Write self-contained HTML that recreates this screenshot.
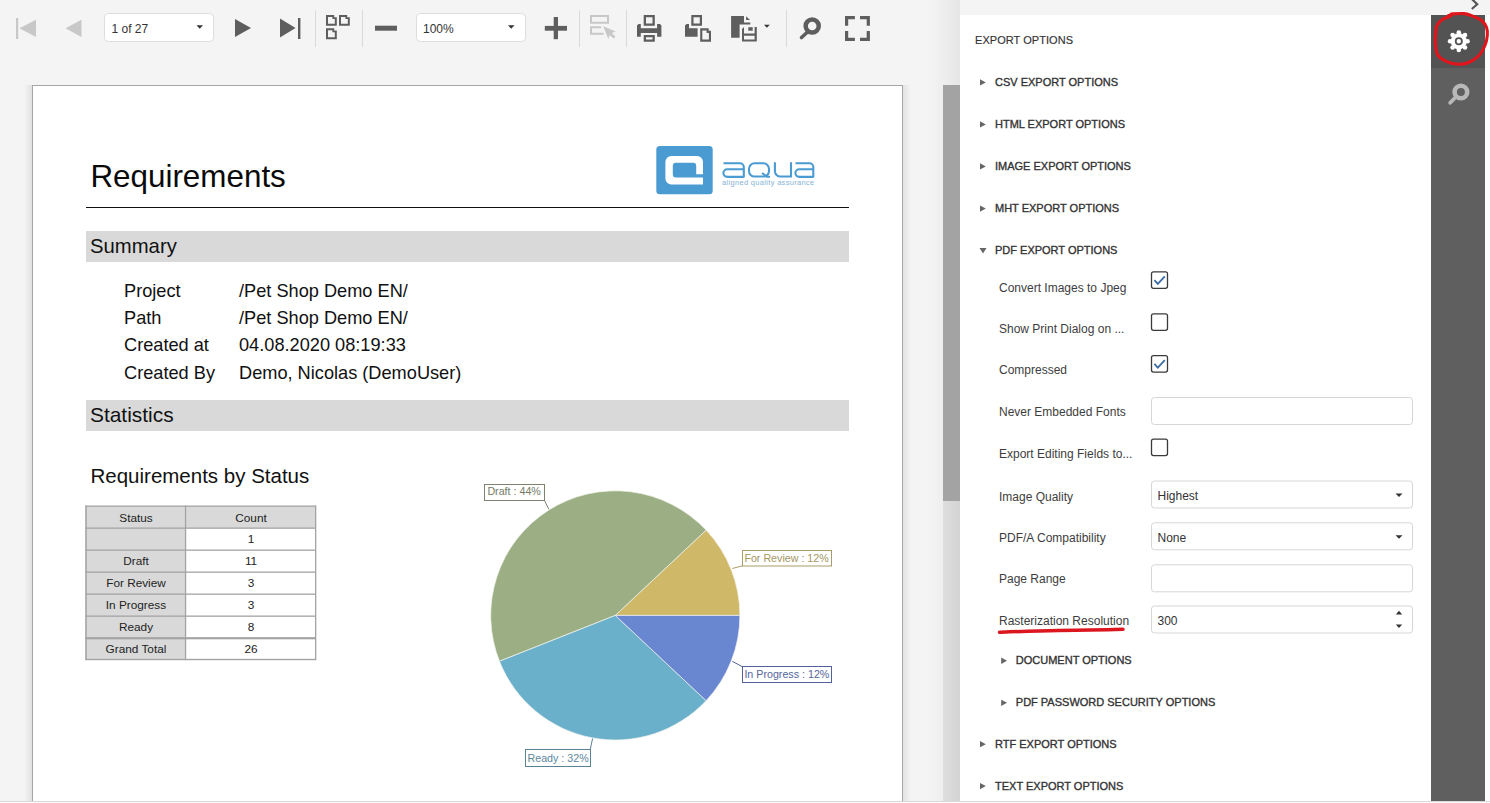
<!DOCTYPE html>
<html><head><meta charset="utf-8">
<style>
*{box-sizing:border-box}
html,body{margin:0;padding:0;width:1490px;height:803px;overflow:hidden;background:#f4f4f4;font-family:"Liberation Sans",sans-serif}
.a{position:absolute}
.t{position:absolute;white-space:nowrap;line-height:1}
svg{position:absolute;overflow:visible}
</style></head><body>
<!-- ============ VIEWER AREA ============ -->
<div class="a" id="viewer" style="left:0;top:0;width:960px;height:801px;background:#f4f4f4">
  <!-- page shadow -->
  <div class="a" style="left:24px;top:85px;width:8px;height:716px;background:linear-gradient(to right,rgba(0,0,0,0),rgba(0,0,0,0.08))"></div>
  <div class="a" style="left:903px;top:85px;width:8px;height:716px;background:linear-gradient(to left,rgba(0,0,0,0),rgba(0,0,0,0.07))"></div>
  <div class="a" style="left:32px;top:85px;width:871px;height:760px;background:#fff;border:1px solid #a6a6a6"></div>
  <!-- scrollbar shadow -->
  <div class="a" style="left:930px;top:0;width:30px;height:801px;background:linear-gradient(to right,rgba(0,0,0,0),rgba(0,0,0,0.06))"></div>
  <!-- scrollbar track & thumb -->
  <div class="a" style="left:943px;top:500px;width:17px;height:301px;background:linear-gradient(to right,#dedede,#d3d3d3)"></div>
  <div class="a" style="left:943px;top:85px;width:17px;height:416px;background:#a3a3a3"></div>
</div>
<div class="a" style="left:0;top:801px;width:1490px;height:1px;background:#dadada"></div><div class="a" style="left:0;top:802px;width:1490px;height:1px;background:#fbfbfb"></div>

<!-- ============ TOOLBAR ============ -->
<div id="toolbar"><svg style="left:0;top:0" width="960" height="60" viewBox="0 0 960 60">
<g fill="#c8c8c8">
<rect x="16" y="18" width="2.2" height="21"/>
<polygon points="19.5,28.3 36,19.7 36,37"/>
<polygon points="65.5,28.3 81.5,19.7 81.5,37"/>
</g>
<rect x="104.5" y="13.5" width="109" height="28" rx="4" fill="#fff" stroke="#dddddd"/>
<rect x="416.5" y="13.5" width="109" height="28" rx="4" fill="#fff" stroke="#dddddd"/>
<g fill="#333"><polygon points="196.5,25.3 203,25.3 199.75,28.8"/><polygon points="508,25.3 514.5,25.3 511.25,28.8"/>
<polygon points="764,24.8 769.8,24.8 766.9,27.8"/></g>
<g fill="#5e5e5e">
<polygon points="235,19 235,37 251,28"/>
<polygon points="280,18.5 280,37.5 295.5,28"/>
<rect x="298" y="18" width="2.4" height="21"/>
<path fill-rule="evenodd" d="M326,15H334.2V17.2H336.8V25.7H326Z M328,17H332.4V19H334.8V23.7H328Z"/>
<path fill-rule="evenodd" d="M339,15H347.2V17.2H349.8V25.7H339Z M341,17H345.4V19H347.8V23.7H341Z"/>
<path fill-rule="evenodd" d="M326,28.3H334.2V30.5H336.8V39.2H326Z M328,30.3H332.4V32.3H334.8V37.2H328Z"/>
<rect x="375" y="25.7" width="22" height="5"/>
<rect x="544.8" y="25.9" width="22.2" height="4.8"/>
<rect x="553.7" y="17" width="4.3" height="22.2"/>
<!-- printer -->
<path fill-rule="evenodd" d="M643.7,15H654.8V25.7H643.7Z M646,17.3H652.5V23.5H646Z"/>
<path d="M637,25.5L638.5,24H640.8V28.3H657.1V24H660L661.4,25.5V36.8H657.1V33.1H640.8V36.8H637Z"/>
<path fill-rule="evenodd" d="M643.7,35.1H654.8V41.7H643.7Z M646,37.3H652.5V39.4H646Z"/>
<!-- print page -->
<path fill-rule="evenodd" d="M691.3,15H702V25.7H691.3Z M693.5,17.3H699.8V23.5H693.5Z"/>
<path d="M685,25.5L686.5,24H689V28.3H697.6V36.8H685Z"/>
<path fill-rule="evenodd" d="M700.2,28.3H708.7V30.8H711V41.7H700.2Z M702.3,30.4H706.6V32.9H708.9V39.6H702.3Z"/>
<!-- export -->
<path d="M731.1,16.1H744V22.6H750.3V24.4H739.6V37.7H731.1Z"/>
<polygon points="746.1,16.3 750,20 746.1,20"/>
<path fill-rule="evenodd" d="M742,29L744,27V33.5H754.6V27H756.8V41.6H742Z M744,35.7H754.6V39.5H744Z"/>
<rect x="748.3" y="27.2" width="4.4" height="3.5"/>
<!-- search -->
<circle cx="812.2" cy="26" r="6.55" fill="none" stroke="#5e5e5e" stroke-width="4.5"/>
<line x1="807" y1="32.5" x2="801.5" y2="37.5" stroke="#5e5e5e" stroke-width="3.6" stroke-linecap="round"/>
<!-- fullscreen -->
<path d="M845,16H854.9V19.2H848.2V25.8H845Z"/>
<path d="M869.9,16H860V19.2H866.7V25.8H869.9Z"/>
<path d="M845,40.9H854.9V37.7H848.2V31.1H845Z"/>
<path d="M869.9,40.9H860V37.7H866.7V31.1H869.9Z"/>
</g>
<g fill="#c8c8c8">
<path fill-rule="evenodd" d="M590,15H609V23.7H590Z M592,17H607V21.7H592Z"/>
<path d="M590,26.3H601V28.3H592V32.8H603.7V34.8H590Z"/>
<polygon points="603.3,26.3 615.7,31.4 611.8,33 615.5,36.8 613.5,38.6 609.8,34.9 608.3,39"/>
</g>
<g fill="#dadada">
<rect x="315" y="10" width="1" height="37"/>
<rect x="362" y="10" width="1" height="37"/>
<rect x="579" y="10" width="1" height="37"/>
<rect x="626" y="10" width="1" height="37"/>
<rect x="786" y="10" width="1" height="37"/>
</g>
</svg>
<div class="t" style="left:111.5px;top:22.8px;font-size:12px;color:#333">1 of 27</div>
<div class="t" style="left:423px;top:22.8px;font-size:12px;color:#333">100%</div>
</div>

<!-- ============ DOCUMENT ============ -->
<div id="doc">
<div class="t" style="left:90.4px;top:161px;font-size:31.4px;color:#0a0a0a">Requirements</div>
<div class="a" style="left:86px;top:206.5px;width:763px;height:1.6px;background:#111"></div>
<!-- logo -->
<svg style="left:0;top:0" width="960" height="803">
<rect x="656.3" y="145.9" width="56.4" height="48.3" rx="3.5" fill="#4b9bd3"/>
<path d="M671.4,156H697A6,6 0 0 1 703,162V174.2H696.2V165.8A3,3 0 0 0 693.2,162.8H675.8A3,3 0 0 0 672.8,165.8V174.6A3,3 0 0 0 675.8,177.6H703V184.5H671.4A6,6 0 0 1 665.4,178.5V162A6,6 0 0 1 671.4,156Z" fill="#fff"/>
<g fill="none" stroke="#4b9bd3" stroke-width="2.1" transform="translate(0,0.5)">
<!-- a -->
<path d="M723.5,162.8H740A3.8,3.8 0 0 1 743.8,166.6V177.1"/>
<path d="M743.8,168.8H727.2A3.8,3.8 0 0 0 727.2,176.4H743.8"/>
<!-- q -->
<path d="M754.5,162.8H763.5A5.5,5.5 0 0 1 769,168.3V170.5A5.5,5.5 0 0 1 763.5,176H754.5A5.5,5.5 0 0 1 749,170.5V168.3A5.5,5.5 0 0 1 754.5,162.8Z"/>
<path d="M762,172.5L767,176.2H770"/>
<!-- u -->
<path d="M774.9,161.7V170.5A5.5,5.5 0 0 0 780.4,176H791V161.7"/>
<!-- a -->
<path d="M795.5,162.8H809.5A3.8,3.8 0 0 1 813.3,166.6V177.1"/>
<path d="M813.3,168.8H799.2A3.8,3.8 0 0 0 799.2,176.4H813.3"/>
</g>
<path d="M615.3,615.4 L739.90,615.40 A124.6,124.6 0 0 0 706.13,530.11 Z" fill="#cfb867" stroke="#f4f4ee" stroke-width="0.7"/><path d="M615.3,615.4 L706.13,530.11 A124.6,124.6 0 0 0 499.45,661.27 Z" fill="#9caf84" stroke="#f4f4ee" stroke-width="0.7"/><path d="M615.3,615.4 L499.45,661.27 A124.6,124.6 0 0 0 706.13,700.69 Z" fill="#6bb0cb" stroke="#f4f4ee" stroke-width="0.7"/><path d="M615.3,615.4 L706.13,700.69 A124.6,124.6 0 0 0 739.90,615.40 Z" fill="#6986d1" stroke="#f4f4ee" stroke-width="0.7"/>
<g fill="none" stroke-width="1">
<rect x="484.5" y="484.5" width="60" height="16" stroke="#7c8470"/>
<polyline points="544.5,500.5 548.8,509.3" stroke="#7c8470"/>
<rect x="742.5" y="550.5" width="89" height="15.5" stroke="#a89c6a"/>
<polyline points="742.5,565.8 732.3,568.5" stroke="#a89c6a"/>
<rect x="742.5" y="666.5" width="89" height="16" stroke="#53629a"/>
<polyline points="742.5,666.8 732.3,661.3" stroke="#53629a"/>
<rect x="525.5" y="749.5" width="65" height="17" stroke="#5b8194"/>
<polyline points="590.2,749.5 592.6,738.5" stroke="#5b8194"/>
</g>
</svg>
<div class="t" style="left:722px;top:179.6px;font-size:6.6px;color:#86b2d4;letter-spacing:0.3px;transform:scaleX(1.13);transform-origin:left">aligned quality assurance</div>

<div class="a" style="left:86px;top:231px;width:763px;height:30.5px;background:#d9d9d9"></div>
<div class="t" style="left:90px;top:235.8px;font-size:20.3px;color:#111">Summary</div>

<div class="t" style="left:124px;top:282.1px;font-size:18.2px;color:#111">Project</div>
<div class="t" style="left:239px;top:282.1px;font-size:18.2px;color:#111">/Pet Shop Demo EN/</div>
<div class="t" style="left:124px;top:309px;font-size:18.2px;color:#111">Path</div>
<div class="t" style="left:239px;top:309px;font-size:18.2px;color:#111">/Pet Shop Demo EN/</div>
<div class="t" style="left:124px;top:335.8px;font-size:18.2px;color:#111">Created at</div>
<div class="t" style="left:239px;top:335.8px;font-size:18.2px;color:#111">04.08.2020 08:19:33</div>
<div class="t" style="left:124px;top:364px;font-size:18.2px;color:#111">Created By</div>
<div class="t" style="left:239px;top:364px;font-size:18.2px;color:#111">Demo, Nicolas (DemoUser)</div>

<div class="a" style="left:86px;top:400px;width:763px;height:30.5px;background:#d9d9d9"></div>
<div class="t" style="left:90px;top:404.5px;font-size:20.9px;color:#111">Statistics</div>

<div class="t" style="left:90.5px;top:465.5px;font-size:20.5px;color:#111">Requirements by Status</div>
<svg style="left:0;top:0" width="960" height="803"><rect x="86" y="506" width="100" height="22" fill="#d9d9d9"/><rect x="186" y="506" width="130" height="22" fill="#d9d9d9"/><rect x="86" y="528" width="100" height="22" fill="#d9d9d9"/><rect x="186" y="528" width="130" height="22" fill="#fff"/><rect x="86" y="550" width="100" height="22" fill="#d9d9d9"/><rect x="186" y="550" width="130" height="22" fill="#fff"/><rect x="86" y="572" width="100" height="22" fill="#d9d9d9"/><rect x="186" y="572" width="130" height="22" fill="#fff"/><rect x="86" y="594" width="100" height="22" fill="#d9d9d9"/><rect x="186" y="594" width="130" height="22" fill="#fff"/><rect x="86" y="616" width="100" height="22" fill="#d9d9d9"/><rect x="186" y="616" width="130" height="22" fill="#fff"/><rect x="86" y="638" width="100" height="22" fill="#d9d9d9"/><rect x="186" y="638" width="130" height="22" fill="#fff"/><g fill="#a3a3a3"><rect x="85.5" y="505.5" width="230.5" height="1.3"/><rect x="85.5" y="527.5" width="230.5" height="1.3"/><rect x="85.5" y="549.5" width="230.5" height="1.3"/><rect x="85.5" y="571.5" width="230.5" height="1.3"/><rect x="85.5" y="593.5" width="230.5" height="1.3"/><rect x="85.5" y="615.5" width="230.5" height="1.3"/><rect x="85.5" y="637.5" width="230.5" height="1.3"/><rect x="85.5" y="658.8" width="230.5" height="1.4"/><rect x="85.5" y="637.3" width="230.5" height="2"/><rect x="85.2" y="505.5" width="1.6" height="154.7"/><rect x="184.9" y="505.5" width="1.3" height="154.7"/><rect x="315" y="505.5" width="1.3" height="154.7"/></g></svg><div class="t" style="left:86px;width:100px;text-align:center;top:512.5px;font-size:11.8px;color:#222">Status</div><div class="t" style="left:186px;width:130px;text-align:center;top:512.5px;font-size:11.8px;color:#222">Count</div><div class="t" style="left:186px;width:130px;text-align:center;top:534.4px;font-size:11.8px;color:#222">1</div><div class="t" style="left:86px;width:100px;text-align:center;top:556.3px;font-size:11.8px;color:#222">Draft</div><div class="t" style="left:186px;width:130px;text-align:center;top:556.3px;font-size:11.8px;color:#222">11</div><div class="t" style="left:86px;width:100px;text-align:center;top:578.2px;font-size:11.8px;color:#222">For Review</div><div class="t" style="left:186px;width:130px;text-align:center;top:578.2px;font-size:11.8px;color:#222">3</div><div class="t" style="left:86px;width:100px;text-align:center;top:600.2px;font-size:11.8px;color:#222">In Progress</div><div class="t" style="left:186px;width:130px;text-align:center;top:600.2px;font-size:11.8px;color:#222">3</div><div class="t" style="left:86px;width:100px;text-align:center;top:622.1px;font-size:11.8px;color:#222">Ready</div><div class="t" style="left:186px;width:130px;text-align:center;top:622.1px;font-size:11.8px;color:#222">8</div><div class="t" style="left:86px;width:100px;text-align:center;top:643.7px;font-size:11.8px;color:#222">Grand Total</div><div class="t" style="left:186px;width:130px;text-align:center;top:643.7px;font-size:11.8px;color:#222">26</div><div class="t" style="left:487.4px;top:486.2px;font-size:10.7px;color:#727d64">Draft : 44%</div><div class="t" style="left:744.4px;top:552.6px;font-size:10.7px;color:#a39660">For Review : 12%</div><div class="t" style="left:744.4px;top:668.5px;font-size:10.7px;color:#55659c">In Progress : 12%</div><div class="t" style="left:527.5px;top:752.7px;font-size:10.7px;color:#5d879c">Ready : 32%</div></div>

<!-- ============ PANEL ============ -->
<div class="a" style="left:960px;top:0;width:530px;height:15px;background:#f4f4f4"></div>
<div class="a" style="left:960px;top:15px;width:471px;height:786px;background:#fff"></div>
<div class="a" style="left:1431px;top:15px;width:54px;height:53px;background:#535353"></div>
<div class="a" style="left:1431px;top:68px;width:54px;height:733px;background:#5f5f5f"></div>
<div class="a" style="left:1485px;top:15px;width:5px;height:786px;background:#fcfcfc"></div>
<div id="panel"><svg style="left:0;top:0" width="1490" height="803"><g fill="#666"><polygon points="980,79.3 980,85.6 985.8,82.45"/><polygon points="980,121.30000000000001 980,127.60000000000001 985.8,124.45000000000002"/><polygon points="980,163.3 980,169.60000000000002 985.8,166.45000000000002"/><polygon points="980,205.4 980,211.70000000000002 985.8,208.55"/><polygon points="979.5,247.9 986.5,247.9 983,253.4"/><polygon points="1001.2,657.6 1001.2,663.9 1007.0,660.75"/><polygon points="1001.2,699.7 1001.2,706.0 1007.0,702.85"/><polygon points="980,741 980,747.3 985.8,744.15"/><polygon points="980,782.9 980,789.1999999999999 985.8,786.05"/></g><rect x="1151.5" y="271.8" width="16" height="16.5" rx="2" fill="#fff" stroke="#3a3a3a" stroke-width="1.3"/><polyline points="1154.4,280.1 1157.8,283.9 1164.8,276.3" fill="none" stroke="#3d6da6" stroke-width="1.8"/><rect x="1151.5" y="313.8" width="16" height="16.5" rx="2" fill="#fff" stroke="#3a3a3a" stroke-width="1.3"/><rect x="1151.5" y="355.6" width="16" height="16.5" rx="2" fill="#fff" stroke="#3a3a3a" stroke-width="1.3"/><polyline points="1154.4,363.90000000000003 1157.8,367.7 1164.8,360.1" fill="none" stroke="#3d6da6" stroke-width="1.8"/><rect x="1151.5" y="397.5" width="261" height="27" rx="3" fill="#fff" stroke="#d6d6d6"/><rect x="1151.5" y="439.1" width="16" height="16.5" rx="2" fill="#fff" stroke="#3a3a3a" stroke-width="1.3"/><rect x="1151.5" y="481.0" width="261" height="27" rx="3" fill="#fff" stroke="#d6d6d6"/><polygon points="1395.5,493.5 1402.5,493.5 1399,497.0" fill="#333"/><rect x="1151.5" y="522.8" width="261" height="27" rx="3" fill="#fff" stroke="#d6d6d6"/><polygon points="1395.5,535.3 1402.5,535.3 1399,538.8" fill="#333"/><rect x="1151.5" y="564.8" width="261" height="27" rx="3" fill="#fff" stroke="#d6d6d6"/><rect x="1151.5" y="606.0" width="261" height="27" rx="3" fill="#fff" stroke="#d6d6d6"/><polygon points="1395.8,614.5 1402.2,614.5 1399,610.7" fill="#333"/><polygon points="1395.8,624.5 1402.2,624.5 1399,628.1" fill="#333"/><path d="M999.5,632.2 C1030,631.2 1060,630.2 1090,630 C1105,629.8 1115,629.5 1123,629.2" fill="none" stroke="#dc161e" stroke-width="3.5" stroke-linecap="round"/><g fill="#fff"><circle cx="1458.8" cy="41.3" r="8.1"/><circle cx="1458.80" cy="32.55" r="2.3"/><circle cx="1452.61" cy="35.11" r="2.3"/><circle cx="1450.05" cy="41.30" r="2.3"/><circle cx="1452.61" cy="47.49" r="2.3"/><circle cx="1458.80" cy="50.05" r="2.3"/><circle cx="1464.99" cy="47.49" r="2.3"/><circle cx="1467.55" cy="41.30" r="2.3"/><circle cx="1464.99" cy="35.11" r="2.3"/></g>
<circle cx="1458.8" cy="41.3" r="3.1" fill="none" stroke="#535353" stroke-width="1.8"/>
<circle cx="1460.9" cy="92" r="6.3" fill="none" stroke="#b8b8b8" stroke-width="4.6"/>
<line x1="1455.8" y1="97" x2="1450.2" y2="102.8" stroke="#b8b8b8" stroke-width="3.8" stroke-linecap="round"/>
<polyline points="1471.8,-1 1477.2,4.3 1471.8,9" fill="none" stroke="#555" stroke-width="2.2"/>
<path d="M1451,14.0 C1453.20,13.93 1460.40,13.18 1464.2,13.6 C1468.00,14.02 1470.90,15.35 1473.8,16.5 C1476.70,17.65 1479.48,18.70 1481.6,20.5 C1483.72,22.30 1485.55,24.80 1486.5,27.3 C1487.45,29.80 1487.53,32.55 1487.3,35.5 C1487.07,38.45 1486.48,41.67 1485.1,45 C1483.72,48.33 1481.75,52.58 1479,55.5 C1476.25,58.42 1472.08,61.05 1468.6,62.5 C1465.12,63.95 1461.73,64.35 1458.1,64.2 C1454.47,64.05 1450.13,63.05 1446.8,61.6 C1443.47,60.15 1439.98,58.12 1438.1,55.5 C1436.22,52.88 1435.93,49.53 1435.5,45.9 C1435.07,42.27 1435.22,37.18 1435.5,33.7 C1435.78,30.22 1436.05,27.37 1437.2,25 C1438.35,22.63 1440.08,21.07 1442.4,19.5 C1444.72,17.93 1450.08,16.27 1451.1,15.6 C1452.12,14.93 1448.93,15.52 1448.5,15.5" fill="none" stroke="#e2141b" stroke-width="3.1" stroke-linecap="round"/>
</svg>
<div class="t" style="left:975px;top:34.6px;font-size:11px;color:#333;letter-spacing:0.05px;-webkit-text-stroke:0.15px #333">EXPORT OPTIONS</div>
<div class="t" style="left:995px;top:77.0px;font-size:11px;color:#333;-webkit-text-stroke:0.35px #333">CSV EXPORT OPTIONS</div>
<div class="t" style="left:995px;top:119.0px;font-size:11px;color:#333;-webkit-text-stroke:0.35px #333">HTML EXPORT OPTIONS</div>
<div class="t" style="left:995px;top:161.0px;font-size:11px;color:#333;-webkit-text-stroke:0.35px #333">IMAGE EXPORT OPTIONS</div>
<div class="t" style="left:995px;top:203.1px;font-size:11px;color:#333;-webkit-text-stroke:0.35px #333">MHT EXPORT OPTIONS</div>
<div class="t" style="left:995px;top:245.1px;font-size:11px;color:#333;-webkit-text-stroke:0.35px #333">PDF EXPORT OPTIONS</div>
<div class="t" style="left:1015.8px;top:655.2px;font-size:11px;color:#333;-webkit-text-stroke:0.35px #333">DOCUMENT OPTIONS</div>
<div class="t" style="left:1015.8px;top:697.4px;font-size:11px;color:#333;-webkit-text-stroke:0.35px #333">PDF PASSWORD SECURITY OPTIONS</div>
<div class="t" style="left:995px;top:738.6px;font-size:11px;color:#333;-webkit-text-stroke:0.35px #333">RTF EXPORT OPTIONS</div>
<div class="t" style="left:995px;top:780.5px;font-size:11px;color:#333;-webkit-text-stroke:0.35px #333">TEXT EXPORT OPTIONS</div>
<div class="t" style="left:999px;top:282.1px;font-size:12px;color:#3d3d3d">Convert Images to Jpeg</div>
<div class="t" style="left:999px;top:323.1px;font-size:12px;color:#3d3d3d">Show Print Dialog on ...</div>
<div class="t" style="left:999px;top:364.0px;font-size:12px;color:#3d3d3d">Compressed</div>
<div class="t" style="left:999px;top:405.7px;font-size:12px;color:#3d3d3d">Never Embedded Fonts</div>
<div class="t" style="left:999px;top:447.8px;font-size:12px;color:#3d3d3d">Export Editing Fields to...</div>
<div class="t" style="left:999px;top:490.5px;font-size:12px;color:#3d3d3d">Image Quality</div>
<div class="t" style="left:1157.5px;top:489.8px;font-size:12px;color:#333">Highest</div>
<div class="t" style="left:999px;top:532.0px;font-size:12px;color:#3d3d3d">PDF/A Compatibility</div>
<div class="t" style="left:1157.5px;top:531.6px;font-size:12px;color:#333">None</div>
<div class="t" style="left:999px;top:573.1px;font-size:12px;color:#3d3d3d">Page Range</div>
<div class="t" style="left:999px;top:615.1px;font-size:12px;color:#3d3d3d">Rasterization Resolution</div>
<div class="t" style="left:1157.5px;top:614.6px;font-size:12px;color:#333">300</div>
</div>
</body></html>
